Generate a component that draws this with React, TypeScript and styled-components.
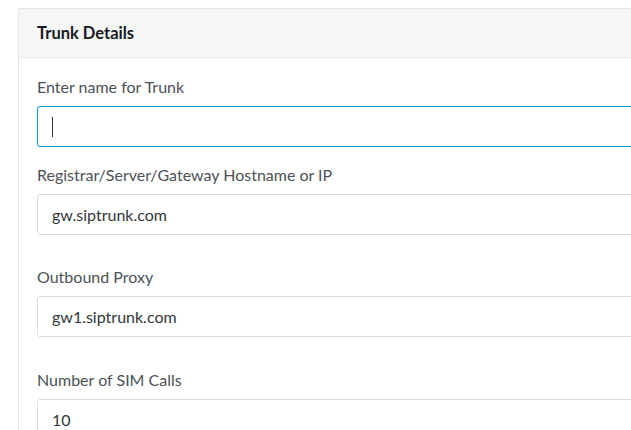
import React from "react";
import styled, { createGlobalStyle } from "styled-components";

const Global = createGlobalStyle`
  html, body {
    margin: 0;
    padding: 0;
    background: #ffffff;
    overflow: hidden;
  }
  body {
    font-family: "Lato", "Open Sans", sans-serif;
    -webkit-font-smoothing: antialiased;
  }
`;

const Page = styled.div`
  padding: 8px 0 0 18px;
  width: 720px;
`;

const Panel = styled.section`
  border: 1px solid #e1e5e5;
  border-radius: 2px;
  background: #ffffff;
`;

const PanelHeader = styled.header`
  display: flex;
  align-items: center;
  height: 48px;
  padding: 0 18px;
  background: #f5f6f6;
  border-bottom: 1px solid #e9ecec;
`;

const Title = styled.h3`
  margin: 0;
  font-size: 16.5px;
  font-weight: 700;
  color: #161a1d;
`;

const PanelBody = styled.div`
  display: flex;
  flex-direction: column;
  padding: 19px 18px 20px;
`;

const Group = styled.div<{ $gap: number }>`
  display: flex;
  flex-direction: column;
  margin-bottom: ${(p) => p.$gap}px;
`;

const Label = styled.label`
  font-size: 16px;
  line-height: 20px;
  color: #4c5257;
  margin-bottom: 9px;
`;

const Field = styled.div<{ $focused?: boolean }>`
  display: flex;
  align-items: center;
  box-sizing: border-box;
  height: 41px;
  padding: 0 14px;
  border: 1px solid ${(p) => (p.$focused ? "#0097d6" : "#d6dddd")};
  border-radius: 3px;
  font-size: 16px;
  color: #33373a;
  background: #ffffff;
`;

const Caret = styled.span`
  display: block;
  width: 1px;
  height: 20px;
  background: #333;
`;

const fields = [
  { label: "Enter name for Trunk", value: "", focused: true, gap: 18 },
  { label: "Registrar/Server/Gateway Hostname or IP", value: "gw.siptrunk.com", gap: 32 },
  { label: "Outbound Proxy", value: "gw1.siptrunk.com", gap: 33 },
  { label: "Number of SIM Calls", value: "10", gap: 20 },
];

export default function App() {
  return (
    <Page>
      <Global />
      <Panel>
        <PanelHeader>
          <Title>Trunk Details</Title>
        </PanelHeader>
        <PanelBody>
          {fields.map((f) => (
            <Group key={f.label} $gap={f.gap}>
              <Label>{f.label}</Label>
              <Field $focused={f.focused}>{f.focused ? <Caret /> : f.value}</Field>
            </Group>
          ))}
        </PanelBody>
      </Panel>
    </Page>
  );
}
